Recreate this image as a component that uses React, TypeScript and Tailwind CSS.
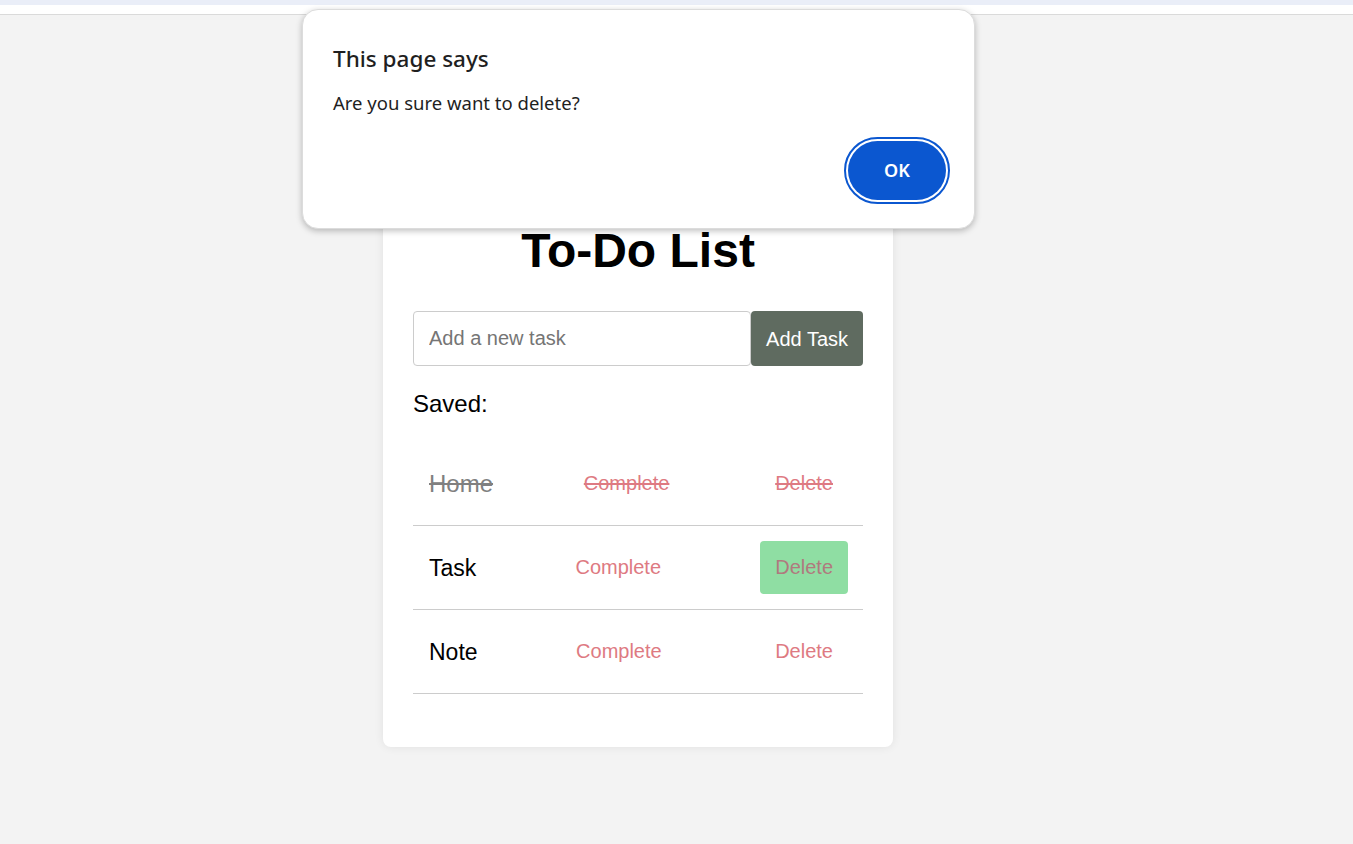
import React from "react";

interface TaskItem {
    name: string,
    done: boolean,
    hovered?: boolean
}

const tasks: TaskItem[] = [
    {name: "Home", done: true},
    {name: "Task", done: false, hovered: true},
    {name: "Note", done: false}
];

function TaskRow({item}: {item: TaskItem}) {
    const strike = item.done ? " line-through" : "";
    return (
        <li className="flex items-center justify-between pl-4 pr-[15px] py-[15px] border-b border-[#cccccc]">
            <span className={(item.done ? "text-[24px] text-[#808080]" : "text-[23px] text-black") + " leading-[26px]" + strike}>
                {item.name}
            </span>
            <button className={"px-[15px] py-[15px] text-[20px] leading-[23px] text-[#de7a82] rounded-[4px]" + strike}>
                Complete
            </button>
            <button className={"px-[15px] py-[15px] text-[20px] leading-[23px] rounded-[4px]" + strike + (item.hovered ? " bg-[#8fdea3] text-[#b07a7e]" : " text-[#de7a82]")}>
                Delete
            </button>
        </li>
    );
}

function ConfirmDialog() {
    return (
        <div className="absolute left-[302px] top-[9px] w-[673px] h-[220px] bg-white rounded-[16px] border border-[#dcdcdc] shadow-[0_2px_6px_rgba(0,0,0,0.25)] font-['Noto_Sans',sans-serif]">
            <div className="flex flex-col h-full pl-[30px] pr-[24px] pt-[34px] pb-[24px]">
                <div className="text-[22.5px] leading-[30px] font-medium text-[#1f1f1f]">This page says</div>
                <div className="mt-[17px] text-[18.5px] leading-[24px] text-[#1f1f1f]">Are you sure want to delete?</div>
                <div className="mt-auto flex justify-end">
                    <div className="rounded-full border-2 border-[#0b57d0] p-[2px]">
                        <button className="w-[98px] h-[59px] rounded-full bg-[#0b57d0] text-white text-[18px] font-semibold">
                            OK
                        </button>
                    </div>
                </div>
            </div>
        </div>
    );
}

export default function App() {
    return (
        <div className="relative min-h-[844px] bg-[#f3f3f3] font-['Liberation_Sans',Arial,sans-serif]">
            <div className="h-[5px] bg-[#eaeef8]"></div>
            <div className="h-[9px] bg-white"></div>
            <div className="h-[1px] bg-[#dadada]"></div>

            <div className="pt-[160px] pb-[97px]">
                <div className="ml-[383px] w-[510px] bg-white rounded-[8px] shadow-[0_0_10px_rgba(0,0,0,0.08)] px-[30px] pt-[30px] pb-[53px]">
                    <h1 className="mt-[18px] text-center text-[48px] leading-[55px] font-bold text-black">
                        To-Do List
                    </h1>

                    <div className="mt-[33px] flex">
                        <input
                            className="flex-1 min-w-0 h-[55px] border border-[#cccccc] rounded-[4px] pl-[15px] text-[20px] text-black placeholder:text-[#757575] outline-none"
                            placeholder="Add a new task"/>
                        <button className="h-[55px] px-[15px] bg-[#5f6b60] text-white text-[20px] rounded-[4px]">
                            Add Task
                        </button>
                    </div>

                    <div className="mt-[24px] text-[24px] leading-[28px] text-black">Saved:</div>

                    <ul className="mt-[24px]">
                        {tasks.map(t => <TaskRow key={t.name} item={t}/>)}
                    </ul>
                </div>
            </div>

            <ConfirmDialog/>
        </div>
    );
}
